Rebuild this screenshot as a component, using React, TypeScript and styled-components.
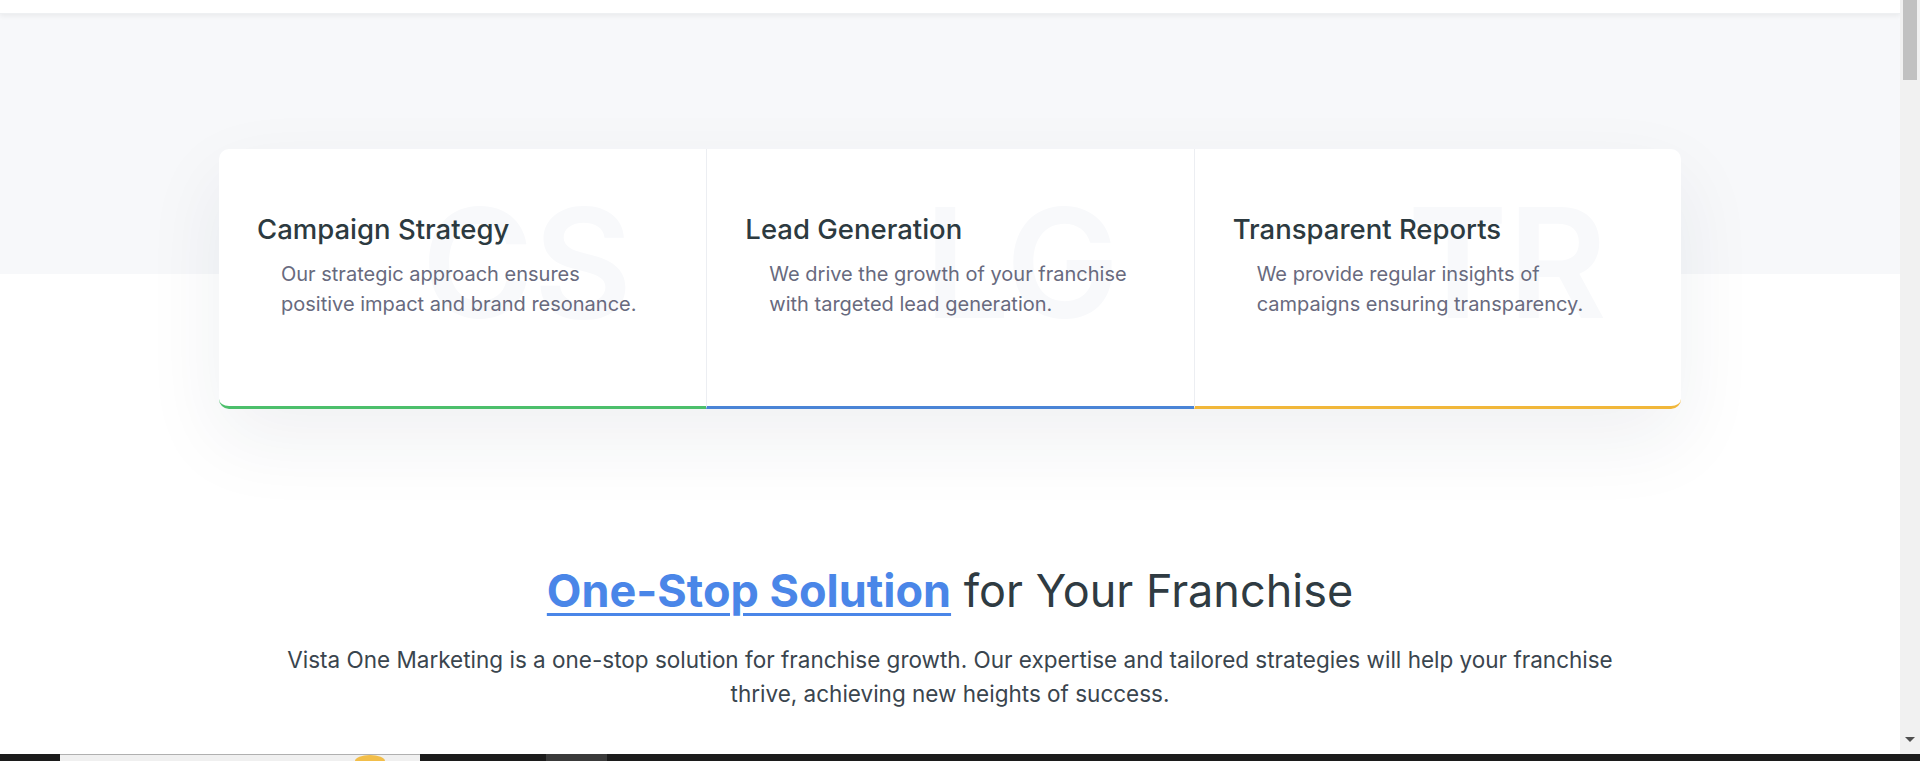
import React from 'react';
import styled, { createGlobalStyle } from 'styled-components';

const GlobalStyle = createGlobalStyle`
  body {
    margin: 0 20px 0 0;
    background: #ffffff;
    font-family: Inter, 'Noto Sans', 'Liberation Sans', sans-serif;
    color: #2f3b42;
  }
`;

const Page = styled.div`
  min-height: 900px;
  background: linear-gradient(#f7f8fa 0 274px, #ffffff 274px);
`;

const TopBar = styled.header`
  height: 13px;
  background: #ffffff;
  border-bottom: 1px solid #eef0f2;
  box-shadow: 0 2px 5px rgba(0, 0, 0, 0.06);
`;

const Features = styled.section`
  display: grid;
  grid-template-columns: repeat(3, 1fr);
  width: 1462px;
  margin: 135px auto 0;
  background: #ffffff;
  border-radius: 10px;
  box-shadow: 0 30px 80px rgba(30, 40, 70, 0.07);
`;

const Card = styled.article<{ $accent: string }>`
  position: relative;
  box-sizing: border-box;
  height: 260px;
  padding: 64px 38px 0;
  overflow: hidden;
  border-bottom: 3px solid ${(p) => p.$accent};
  border-left: 1px solid #eceef2;

  &:first-child {
    border-left: 0;
    border-radius: 10px 0 0 10px;
  }
  &:last-child {
    border-radius: 0 10px 10px 0;
  }
`;

const Watermark = styled.span`
  position: absolute;
  top: 38px;
  right: 74px;
  font-size: 152px;
  line-height: 1;
  font-weight: 600;
  color: #f8f9fb;
  pointer-events: none;
  user-select: none;
`;

const CardTitle = styled.h3`
  position: relative;
  margin: 0;
  font-size: 27.5px;
  line-height: 1.2;
  font-weight: 450;
  color: #2c3a40;
`;

const CardText = styled.p`
  position: relative;
  margin: 13px 0 0 24px;
  font-size: 20px;
  line-height: 30px;
  color: #686a7e;
`;

const Intro = styled.section`
  margin: 155px auto 0;
  text-align: center;
`;

const Heading = styled.h2`
  margin: 0;
  font-size: 45px;
  line-height: 1.2;
  font-weight: 400;
  color: #2f3b42;
`;

const HeadingLink = styled.a`
  color: #4a86e8;
  font-weight: 700;
  text-decoration: underline;
  text-decoration-thickness: 3px;
  text-underline-offset: 6px;
`;

const Lead = styled.p`
  max-width: 1380px;
  margin: 25px auto 0;
  font-size: 22.5px;
  line-height: 34px;
  color: #3a454e;
`;

const Scrollbar = styled.div`
  position: fixed;
  top: 0;
  right: 0;
  bottom: 0;
  width: 20px;
  background: #f1f1f1;
`;

const ScrollThumb = styled.div`
  margin: 0 3px;
  height: 80px;
  background: #c1c1c1;
`;

const ScrollArrow = styled.span`
  position: absolute;
  left: 5px;
  bottom: 19px;
  border-left: 5px solid transparent;
  border-right: 5px solid transparent;
  border-top: 5px solid #505050;
`;

const Taskbar = styled.div`
  position: fixed;
  left: 0;
  right: 0;
  bottom: 0;
  height: 7px;
  display: flex;
  align-items: flex-end;
  background: #1c1c1c;
`;

const TaskSearch = styled.div`
  position: relative;
  margin-left: 60px;
  width: 360px;
  height: 6px;
  background: #f0f0f0;
  border-top: 1px solid #b0b0b0;
`;

const TaskGlow = styled.span`
  position: absolute;
  left: 295px;
  top: 0;
  width: 30px;
  height: 12px;
  border-radius: 50%;
  background: #f2be4a;
`;

const TaskButton = styled.div`
  margin-left: 126px;
  width: 61px;
  height: 7px;
  background: #3a3a3a;
`;

const features = [
  {
    mark: 'CS',
    title: 'Campaign Strategy',
    text: ['Our strategic approach ensures', 'positive impact and brand resonance.'],
    accent: '#4cbf6b',
  },
  {
    mark: 'LG',
    title: 'Lead Generation',
    text: ['We drive the growth of your franchise', 'with targeted lead generation.'],
    accent: '#4a84d6',
  },
  {
    mark: 'TR',
    title: 'Transparent Reports',
    text: ['We provide regular insights of', 'campaigns ensuring transparency.'],
    accent: '#f1b73a',
  },
];

export default function App() {
  return (
    <>
      <GlobalStyle />
      <Page>
        <TopBar />
        <Features>
          {features.map((f) => (
            <Card key={f.mark} $accent={f.accent}>
              <Watermark aria-hidden="true">{f.mark}</Watermark>
              <CardTitle>{f.title}</CardTitle>
              <CardText>
                {f.text[0]}
                <br />
                {f.text[1]}
              </CardText>
            </Card>
          ))}
        </Features>
        <Intro>
          <Heading>
            <HeadingLink href="#">One-Stop Solution</HeadingLink> for Your Franchise
          </Heading>
          <Lead>
            Vista One Marketing is a one-stop solution for franchise growth. Our expertise and
            tailored strategies will help your franchise thrive, achieving new heights of success.
          </Lead>
        </Intro>
      </Page>
      <Scrollbar>
        <ScrollThumb />
        <ScrollArrow />
      </Scrollbar>
      <Taskbar>
        <TaskSearch>
          <TaskGlow />
        </TaskSearch>
        <TaskButton />
      </Taskbar>
    </>
  );
}
